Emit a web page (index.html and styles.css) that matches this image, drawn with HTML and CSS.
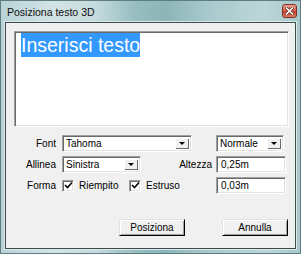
FILE: index.html
```html
<!DOCTYPE html>
<html lang="it">
<head>
    <meta charset="UTF-8">
    <title>Posiziona testo 3D</title>
    <link rel="stylesheet" href="styles.css">
</head>
<body>
    <div class="window">
        <div class="titlebar">
            <span class="title">Posiziona testo 3D</span>
            <span class="close">
                <svg width="9" height="8" viewBox="0 0 9 8">
                    <path d="M1.5 1 L7.5 7 M7.5 1 L1.5 7" stroke="#5a2a24" stroke-width="3" stroke-linecap="square"/>
                    <path d="M1.5 1 L7.5 7 M7.5 1 L1.5 7" stroke="#fff" stroke-width="1.6" stroke-linecap="square"/>
                </svg>
            </span>
        </div>
        <div class="frame">
            <div class="client-edge">
                <div class="client">
                    <div class="text-area"><span class="sel">Inserisci testo</span></div>

                    <div class="row row-first">
                        <label class="lbl">Font</label>
                        <div class="combo combo-font"><span class="val">Tahoma</span><span class="drop"></span></div>
                        <div class="combo combo-style"><span class="val">Normale</span><span class="drop"></span></div>
                    </div>
                    <div class="row">
                        <label class="lbl">Allinea</label>
                        <div class="combo combo-align"><span class="val">Sinistra</span><span class="drop"></span></div>
                        <label class="lbl-right">Altezza</label>
                        <div class="field">0,25m</div>
                    </div>
                    <div class="row">
                        <label class="lbl">Forma</label>
                        <div class="check check-fill">
                            <span class="box"><svg width="9" height="9" viewBox="0 0 9 9"><path d="M1 4 L3.5 6.5 L8 1.5" fill="none" stroke="#000" stroke-width="1.6"/></svg></span>
                            <span>Riempito</span>
                        </div>
                        <div class="check">
                            <span class="box"><svg width="9" height="9" viewBox="0 0 9 9"><path d="M1 4 L3.5 6.5 L8 1.5" fill="none" stroke="#000" stroke-width="1.6"/></svg></span>
                            <span>Estruso</span>
                        </div>
                        <div class="field field-push">0,03m</div>
                    </div>

                    <div class="buttons">
                        <button class="btn">Posiziona</button>
                        <button class="btn">Annulla</button>
                    </div>
                </div>
            </div>
        </div>
    </div>
</body>
</html>
```

FILE: styles.css
```css
body {
    margin: 0;
    padding: 0;
    font-family: "Liberation Sans", Arial, sans-serif;
    font-size: 10px;
    color: #000;
    background: #fff;
}
.window {
    width: 301px;
    height: 254px;
    box-sizing: border-box;
    border: 1px solid #5d7d82;
    background: linear-gradient(to right, #b9d3d7 0%, #d3e3e5 18%, #c4dadc 32%, #96bdc0 45%, #8cb5b9 55%, #a9cacd 70%, #bcd6d8 88%, #a8c7ca 100%);
    display: flex;
    flex-direction: column;
}
.titlebar {
    height: 20px;
    display: flex;
    align-items: center;
    padding: 0 3px 0 6px;
}
.title {
    flex: 1;
    font-size: 10.5px;
    color: #111;
    padding-top: 1px;
}
.close {
    width: 15px;
    height: 14px;
    box-sizing: border-box;
    border: 1px solid #7a3129;
    border-radius: 3px;
    background: linear-gradient(to bottom, #eba092 0%, #d8654f 45%, #c8432d 55%, #dc7a62 100%);
    display: flex;
    align-items: center;
    justify-content: center;
}
.frame {
    flex: 1;
    padding: 0 3px 3px 3px;
    display: flex;
}
.client-edge {
    flex: 1;
    border: 1px solid #dce9eb;
    display: flex;
}
.client {
    flex: 1;
    border: 1px solid #3c4b4e;
    background: #f0f0f0;
    display: flex;
    flex-direction: column;
}
.text-area {
    margin: 8px 6px 0 8px;
    height: 96px;
    box-sizing: border-box;
    border: 1px solid;
    border-color: #a0a0a0 #fff #fff #a0a0a0;
    box-shadow: inset 1px 1px 0 #696969, inset -1px -1px 0 #e3e3e3;
    background: #fff;
    padding: 1px 0 0 6px;
}
.sel {
    display: inline-block;
    background: #3399ff;
    color: #fff;
    font-size: 19.5px;
    line-height: 24px;
    height: 24px;
}
.row {
    display: flex;
    align-items: center;
    height: 17px;
    margin-top: 4px;
}
.row-first {
    margin-top: 8px;
}
.lbl {
    width: 50px;
    text-align: right;
    margin-right: 6px;
}
.lbl-right {
    flex: 1;
    text-align: right;
    margin-right: 4px;
}
.combo, .field {
    height: 17px;
    box-sizing: border-box;
    border: 1px solid;
    border-color: #a0a0a0 #fff #fff #a0a0a0;
    box-shadow: inset 1px 1px 0 #696969, inset -1px -1px 0 #e3e3e3;
    background: #fff;
    display: flex;
    align-items: center;
}
.combo {
    padding: 2px;
}
.val {
    flex: 1;
    padding-left: 1px;
}
.drop {
    width: 14px;
    height: 100%;
    box-sizing: border-box;
    background: #f0f0f0;
    box-shadow: inset 1px 1px 0 #fff, inset -1px -1px 0 #696969;
    display: flex;
    align-items: center;
    justify-content: center;
}
.drop::after {
    content: "";
    border-left: 3px solid transparent;
    border-right: 3px solid transparent;
    border-top: 3px solid #000;
}
.combo-font {
    width: 130px;
}
.combo-style {
    width: 68px;
    margin-left: 24px;
}
.combo-align {
    width: 79px;
}
.field {
    width: 70px;
    padding-left: 4px;
    margin-right: 9px;
}
.field-push {
    margin-left: auto;
}
.check {
    display: flex;
    align-items: center;
    gap: 5px;
}
.check-fill {
    width: 67px;
}
.box {
    width: 12px;
    height: 12px;
    box-sizing: border-box;
    border: 1px solid;
    border-color: #a0a0a0 #fff #fff #a0a0a0;
    box-shadow: inset 1px 1px 0 #696969, inset -1px -1px 0 #e3e3e3;
    background: #fff;
    display: flex;
    align-items: center;
    justify-content: center;
}
.buttons {
    display: flex;
    justify-content: flex-end;
    gap: 37px;
    margin-top: 25px;
    padding-right: 7px;
}
.btn {
    width: 66px;
    height: 17px;
    box-sizing: border-box;
    padding: 0;
    font-family: "Liberation Sans", Arial, sans-serif;
    font-size: 10px;
    color: #000;
    background: #f0f0f0;
    border: 1px solid;
    border-color: #e3e3e3 #000 #000 #e3e3e3;
    box-shadow: inset 1px 1px 0 #fff, inset -1px -1px 0 #a0a0a0;
}
```
